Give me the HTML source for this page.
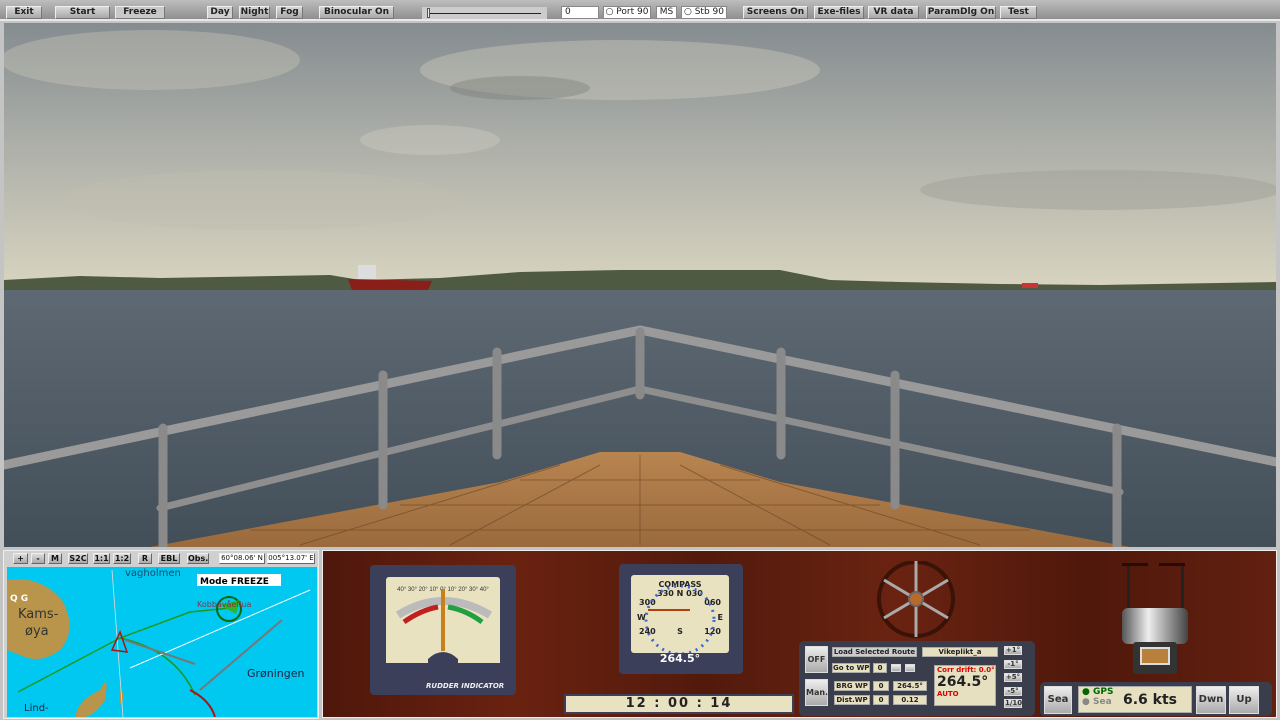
<!DOCTYPE html>
<html><head><meta charset="utf-8"><style>
*{margin:0;padding:0;box-sizing:border-box}
body{width:1280px;height:720px;overflow:hidden;background:#c4c4c4;font-family:"Liberation Sans",Tahoma,sans-serif;position:relative}
.a{position:absolute}
.tb{left:0;top:0;width:1280px;height:21px;background:linear-gradient(#bdbdbd,#8f8f8f);border-bottom:2px solid #e8e8e8}
.b{position:absolute;top:6px;height:13px;background:linear-gradient(#d8d8d8,#a8a8a8);border:1px solid #eee;border-right-color:#777;border-bottom-color:#777;font:bold 9px "DejaVu Sans",sans-serif;color:#222;text-align:center;line-height:11px;white-space:nowrap}
.w{background:#fff;border:1px solid #888;font-weight:normal}
.mb{position:absolute;top:553px;height:11px;background:linear-gradient(#ddd,#aaa);border:1px solid #eee;border-right-color:#666;border-bottom-color:#666;font:bold 8px "DejaVu Sans",sans-serif;text-align:center;line-height:9px;color:#111;white-space:nowrap}
.pb{position:absolute;background:#e6dfc0;border:1px solid #aaa;font:bold 7px "DejaVu Sans",sans-serif;text-align:center;color:#222;white-space:nowrap;overflow:hidden}
.gb{position:absolute;background:linear-gradient(#eee,#aaa);border:1px solid #ddd;font:bold 8px "DejaVu Sans",sans-serif;text-align:center;color:#333;white-space:nowrap}
.wood{background:linear-gradient(90deg,#4e170b,#6a2210 20%,#521a0c 40%,#6a2311 60%,#4f180b 80%,#622010)}
</style></head><body>
<div class="a tb"></div>
<div class="b" style="left:6px;width:36px">Exit</div>
<div class="b" style="left:55px;width:55px">Start</div>
<div class="b" style="left:115px;width:50px;background:#c8c8c8">Freeze</div>
<div class="b" style="left:207px;width:26px;background:#d0d0d0">Day</div>
<div class="b" style="left:239px;width:31px">Night</div>
<div class="b" style="left:276px;width:27px">Fog</div>
<div class="b" style="left:319px;width:75px">Binocular On</div>
<div class="a" style="left:422px;top:7px;width:125px;height:12px;background:#ccc"><div class="a" style="left:7px;top:6px;width:112px;height:1px;background:#222"></div><div class="a" style="left:5px;top:1px;width:3px;height:10px;background:#eee;border:1px solid #555"></div></div>
<div class="b w" style="left:561px;width:38px;text-align:left;padding-left:3px">0</div>
<div class="b w" style="left:603px;width:48px">○ Port 90</div>
<div class="b w" style="left:656px;width:21px">MS</div>
<div class="b w" style="left:681px;width:46px">○ Stb 90</div>
<div class="b" style="left:743px;width:65px">Screens On</div>
<div class="b" style="left:814px;width:50px">Exe-files</div>
<div class="b" style="left:868px;width:51px">VR data</div>
<div class="b" style="left:926px;width:70px">ParamDlg On</div>
<div class="b" style="left:1000px;width:37px">Test</div>

<svg class="a" style="left:4px;top:23px" width="1272" height="524" viewBox="4 23 1272 524">
<defs>
<linearGradient id="sk" x1="0" y1="0" x2="0" y2="1"><stop offset="0" stop-color="#858c90"/><stop offset=".4" stop-color="#a8aba6"/><stop offset="1" stop-color="#d8d4c0"/></linearGradient>
<linearGradient id="se" x1="0" y1="0" x2="0" y2="1"><stop offset="0" stop-color="#5e6973"/><stop offset="1" stop-color="#424e58"/></linearGradient>
<linearGradient id="dk" x1="0" y1="0" x2="0" y2="1"><stop offset="0" stop-color="#b88550"/><stop offset="1" stop-color="#9a6a3c"/></linearGradient>
</defs>
<rect x="4" y="23" width="1272" height="265" fill="url(#sk)"/>
<ellipse cx="150" cy="60" rx="150" ry="30" fill="#c8c6b6" opacity=".4"/>
<ellipse cx="620" cy="70" rx="200" ry="30" fill="#cfcdbd" opacity=".4"/>
<ellipse cx="520" cy="88" rx="70" ry="12" fill="#7a7c78" opacity=".4"/>
<ellipse cx="430" cy="140" rx="70" ry="15" fill="#d0cec0" opacity=".4"/>
<ellipse cx="260" cy="200" rx="200" ry="30" fill="#c0bfb0" opacity=".4"/>
<ellipse cx="1100" cy="190" rx="180" ry="20" fill="#9a9b94" opacity=".4"/>
<rect x="4" y="287" width="1272" height="260" fill="url(#se)"/>
<path d="M4 280 L80 276 L160 278 L330 275 L360 280 L440 278 L520 272 L620 270 L780 270 L830 280 L900 282 L1000 284 L1100 285 L1276 282 L1276 290 L4 290Z" fill="#4e5a42"/>
<path d="M348 279 L432 281 L428 290 L352 290Z" fill="#8a1e18"/>
<rect x="358" y="265" width="18" height="14" fill="#ddd"/>
<rect x="1022" y="283" width="16" height="5" fill="#c33"/>
<path d="M150 547 L500 482 L600 452 L680 452 L780 482 L1130 547Z" fill="url(#dk)"/>
<g stroke="#6a4424" stroke-width="1" opacity=".6"><line x1="300" y1="545" x2="560" y2="465"/><line x1="450" y1="545" x2="600" y2="465"/><line x1="640" y1="545" x2="640" y2="455"/><line x1="830" y1="545" x2="680" y2="465"/><line x1="980" y1="545" x2="720" y2="465"/><line x1="250" y1="530" x2="1030" y2="530"/><line x1="400" y1="505" x2="880" y2="505"/><line x1="520" y1="480" x2="760" y2="480"/></g>
<g stroke="#8e8e8e" fill="none" stroke-linecap="round">
<path d="M4 465 L640 330 L1276 462" stroke-width="9" stroke="#9a9a9a"/>
<path d="M160 508 L640 389 L1120 492" stroke-width="7"/>
<g stroke-width="9" stroke="#8a8a8a"><line x1="163" y1="428" x2="163" y2="545"/><line x1="383" y1="375" x2="383" y2="505"/><line x1="497" y1="352" x2="497" y2="455"/><line x1="640" y1="332" x2="640" y2="395"/><line x1="781" y1="352" x2="781" y2="455"/><line x1="895" y1="375" x2="895" y2="505"/><line x1="1117" y1="428" x2="1117" y2="545"/></g>
</g>
</svg>

<!-- map -->
<div class="a" style="left:3px;top:550px;width:316px;height:169px;background:#d0d0d0;border:1px solid #eee"></div>
<div class="mb" style="left:13px;width:15px">+</div><div class="mb" style="left:31px;width:14px">-</div><div class="mb" style="left:48px;width:14px">M</div><div class="mb" style="left:68px;width:20px">S2C</div><div class="mb" style="left:93px;width:17px">1:1</div><div class="mb" style="left:113px;width:18px">1:2</div><div class="mb" style="left:138px;width:14px">R</div><div class="mb" style="left:158px;width:22px">EBL</div><div class="mb" style="left:187px;width:22px">Obs.</div>
<div class="mb" style="left:219px;width:46px;background:#fff;font-weight:normal;font-size:7px">60°08.06' N</div>
<div class="mb" style="left:267px;width:48px;background:#fff;font-weight:normal;font-size:7px">005°13.07' E</div>
<svg class="a" style="left:7px;top:567px" width="310" height="150" viewBox="7 567 310 150">
<rect x="7" y="567" width="310" height="150" fill="#00c8f0"/>
<path d="M7 580 Q40 575 62 600 Q78 630 60 650 Q40 665 20 655 L7 650Z" fill="#b8954a"/>
<path d="M100 690 Q110 670 105 700 Q95 715 85 717 L75 717 Q78 700 100 690Z M120 690 Q128 695 120 705 Z" fill="#b8954a"/>
<g fill="none" stroke-width="1.5"><path d="M18 692 L120 638 L190 612 L230 608" stroke="#1a9a1a"/><path d="M120 638 Q175 650 195 695" stroke="#1a9a1a"/><path d="M190 690 Q210 700 215 717" stroke="#b01010" stroke-width="2"/><path d="M130 668 L310 590" stroke="#fff" stroke-width="1"/><path d="M200 690 L282 620" stroke="#777" stroke-width="2"/><path d="M125 640 L195 664" stroke="#777" stroke-width="2"/><circle cx="229" cy="609" r="12" stroke="#0a6a0a" stroke-width="2"/><path d="M112 570 L123 717" stroke="#ddd" stroke-width=".8"/><path d="M120 632 L127 652 L112 650Z" stroke="#b01010"/></g>
<path d="M220 605 L240 600 L236 614Z" fill="#2ab82a"/>
<text x="125" y="576" font-size="10" fill="#1a4a6a" font-family="DejaVu Sans">vagholmen</text>
<text x="18" y="618" font-size="13" fill="#333" font-family="DejaVu Sans">Kams-</text><text x="25" y="635" font-size="13" fill="#333" font-family="DejaVu Sans">øya</text>
<text x="10" y="601" font-size="9" fill="#fff" font-weight="bold" font-family="DejaVu Sans">Q G</text>
<text x="247" y="677" font-size="11" fill="#224" font-family="DejaVu Sans">Grøningen</text>
<text x="24" y="711" font-size="10" fill="#224" font-family="DejaVu Sans">Lind-</text>
<text x="197" y="607" font-size="8" fill="#834" font-family="DejaVu Sans">Kobbavåeflua</text>
<rect x="197" y="574" width="84" height="12" fill="#fff"/><text x="200" y="584" font-size="9" font-weight="bold" font-family="DejaVu Sans" fill="#000">Mode  FREEZE</text>
</svg>

<!-- panel -->
<div class="a wood" style="left:322px;top:550px;width:955px;height:168px;border:1px solid #eee"></div>
<div class="a" style="left:370px;top:565px;width:146px;height:130px;background:#3b3f5a;border-radius:4px"></div>
<div class="a" style="left:386px;top:577px;width:114px;height:100px;background:#e8e2c0;border-radius:3px"></div>
<svg class="a" style="left:386px;top:577px" width="114" height="100"><path d="M12 38 Q57 10 104 38" stroke="#bbb" stroke-width="8" fill="none"/><path d="M18 45 Q35 33 52 30" stroke="#c02020" stroke-width="5" fill="none"/><path d="M62 30 Q80 33 96 45" stroke="#20a040" stroke-width="5" fill="none"/><text x="57" y="14" font-size="6" text-anchor="middle" fill="#333">40° 30° 20° 10° 0° 10° 20° 30° 40°</text><rect x="55" y="12" width="4" height="62" fill="#c8801a"/><path d="M42 100 L42 82 Q57 68 72 82 L72 100Z" fill="#3b3f5a"/><rect x="0" y="86" width="114" height="14" fill="#3b3f5a"/></svg>
<div class="a" style="left:426px;top:682px;color:#eee;font:italic bold 7px 'DejaVu Sans';">RUDDER INDICATOR</div>
<div class="a" style="left:619px;top:564px;width:124px;height:110px;background:#3b3f5a;border-radius:4px"></div>
<div class="a" style="left:631px;top:575px;width:98px;height:78px;background:#e8e2c0;border-radius:3px;font:bold 8px 'DejaVu Sans';color:#222;text-align:center">
<div style="margin-top:5px">COMPASS</div><div>330 N 030</div><div style="display:flex;justify-content:space-between;padding:0 8px">300<span>060</span></div><div style="display:flex;justify-content:space-between;padding:6px 6px 0">W<span>E</span></div><div style="display:flex;justify-content:space-between;padding:5px 8px 0">240<span>S</span>120</div></div>
<svg class="a" style="left:631px;top:575px" width="98" height="78"><circle cx="49" cy="45" r="34" fill="none" stroke="#3a6ad0" stroke-width="3" stroke-dasharray="2 5"/></svg>
<div class="a" style="left:648px;top:609px;width:42px;height:2px;background:#b04010"></div>
<div class="a" style="left:631px;top:652px;width:98px;height:11px;color:#fff;font:bold 11px 'DejaVu Sans';text-align:center">264.5°</div>
<div class="a" style="left:564px;top:694px;width:230px;height:20px;background:#e8e2c0;border:2px solid #3b3f5a;font:bold 13px 'DejaVu Sans';text-align:center;letter-spacing:2px;color:#222">12 : 00 : 14</div>
<svg class="a" style="left:876px;top:561px" width="84" height="80"><circle cx="40" cy="38" r="37" fill="none" stroke="#3a1208" stroke-width="4"/><g stroke="#aaa" stroke-width="3"><line x1="40" y1="0" x2="40" y2="76"/><line x1="8" y1="19" x2="72" y2="57"/><line x1="8" y1="57" x2="72" y2="19"/></g><circle cx="40" cy="38" r="7" fill="#b86a2a" stroke="#666" stroke-width="2"/></svg>
<div class="a" style="left:1122px;top:563px;width:26px;height:3px;background:#2a0a04"></div><div class="a" style="left:1159px;top:563px;width:26px;height:3px;background:#2a0a04"></div>
<div class="a" style="left:1127px;top:566px;width:3px;height:46px;background:#222"></div><div class="a" style="left:1181px;top:566px;width:3px;height:46px;background:#222"></div>
<div class="a" style="left:1122px;top:608px;width:66px;height:36px;background:linear-gradient(90deg,#555,#eee 40%,#999 70%,#444);border-radius:6px"></div>
<div class="a" style="left:1133px;top:642px;width:44px;height:32px;background:#333;border-radius:3px"><div style="margin:5px 7px;height:18px;background:#b8803a;border:2px solid #ddd"></div></div>
<div class="a" style="left:799px;top:641px;width:236px;height:75px;background:#3a3e4c;border-radius:5px"></div>
<div class="gb" style="left:805px;top:646px;width:23px;height:27px;line-height:25px">OFF</div>
<div class="gb" style="left:805px;top:679px;width:23px;height:27px;line-height:25px">Man.</div>
<div class="pb" style="left:832px;top:647px;width:85px;height:10px;line-height:8px;background:#ccc">Load Selected Route</div>
<div class="pb" style="left:922px;top:647px;width:76px;height:10px;line-height:8px">Vikeplikt_a</div>
<div class="pb" style="left:832px;top:663px;width:38px;height:10px;line-height:8px">Go to WP</div>
<div class="pb" style="left:873px;top:663px;width:14px;height:10px;line-height:8px">0</div>
<div class="gb" style="left:891px;top:664px;width:10px;height:8px"></div><div class="gb" style="left:905px;top:664px;width:10px;height:8px"></div>
<div class="pb" style="left:834px;top:681px;width:36px;height:10px;line-height:8px">BRG WP</div>
<div class="pb" style="left:873px;top:681px;width:16px;height:10px;line-height:8px">0</div>
<div class="pb" style="left:893px;top:681px;width:34px;height:10px;line-height:8px">264.5°</div>
<div class="pb" style="left:834px;top:695px;width:36px;height:10px;line-height:8px">Dist.WP</div>
<div class="pb" style="left:873px;top:695px;width:16px;height:10px;line-height:8px">0</div>
<div class="pb" style="left:893px;top:695px;width:34px;height:10px;line-height:8px">0.12</div>
<div class="pb" style="left:934px;top:665px;width:62px;height:41px;text-align:left;padding-left:2px"><div style="color:#d00;font-size:7px">Corr drift: 0.0°</div><div style="font-size:14px;line-height:16px">264.5°</div><div style="color:#d00;font-size:7px">AUTO</div></div>
<div class="gb" style="left:1004px;top:646px;width:18px;height:9px;font-size:7px;line-height:7px">+1°</div>
<div class="gb" style="left:1004px;top:660px;width:18px;height:9px;font-size:7px;line-height:7px">-1°</div>
<div class="gb" style="left:1004px;top:673px;width:18px;height:9px;font-size:7px;line-height:7px">+5°</div>
<div class="gb" style="left:1004px;top:687px;width:18px;height:9px;font-size:7px;line-height:7px">-5°</div>
<div class="gb" style="left:1004px;top:699px;width:18px;height:9px;font-size:7px;line-height:7px">1/10</div>
<div class="a" style="left:1040px;top:682px;width:232px;height:34px;background:#3a3e4c;border-radius:5px"></div>
<div class="gb" style="left:1044px;top:686px;width:28px;height:28px;line-height:26px;font-size:10px">Sea</div>
<div class="pb" style="left:1078px;top:686px;width:114px;height:27px;text-align:left;font-size:9px;padding-left:3px"><div style="color:#060">● GPS</div><div style="color:#888">● Sea</div><div class="a" style="left:44px;top:5px;font-size:14px">6.6 kts</div></div>
<div class="gb" style="left:1196px;top:686px;width:30px;height:28px;line-height:26px;font-size:10px">Dwn</div>
<div class="gb" style="left:1229px;top:686px;width:30px;height:28px;line-height:26px;font-size:10px">Up</div>
</body></html>
